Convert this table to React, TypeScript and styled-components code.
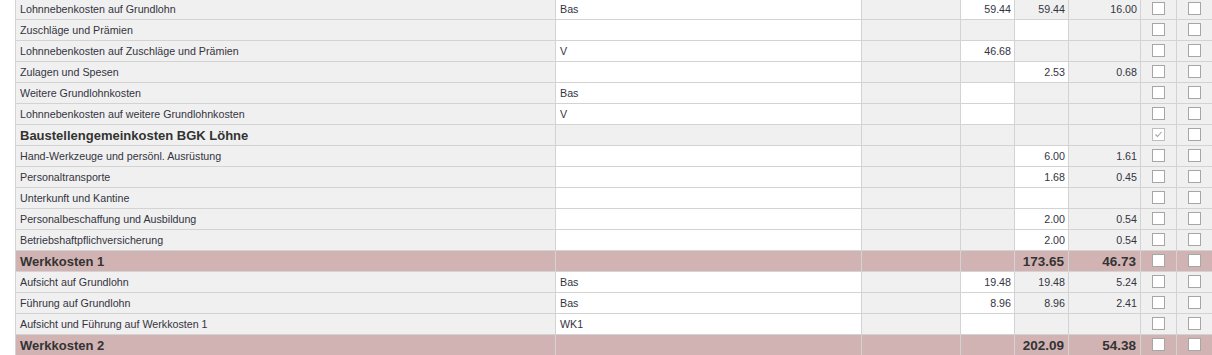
import React from 'react';
import styled, { createGlobalStyle, css } from 'styled-components';

type Kind = 'item' | 'group' | 'sum';

interface CostRow {
  label: string;
  kind?: Kind;
  code?: string;
  a?: string;
  aWhite?: boolean;
  b?: string;
  bWhite?: boolean;
  c?: string;
  checked?: boolean;
}

const rows: CostRow[] = [
  { label: 'Lohnnebenkosten auf Grundlohn', code: 'Bas', a: '59.44', aWhite: true, b: '59.44', c: '16.00' },
  { label: 'Zuschläge und Prämien', bWhite: true },
  { label: 'Lohnnebenkosten auf Zuschläge und Prämien', code: 'V', a: '46.68', aWhite: true },
  { label: 'Zulagen und Spesen', b: '2.53', bWhite: true, c: '0.68' },
  { label: 'Weitere Grundlohnkosten', code: 'Bas', aWhite: true },
  { label: 'Lohnnebenkosten auf weitere Grundlohnkosten', code: 'V', aWhite: true },
  { label: 'Baustellengemeinkosten BGK Löhne', kind: 'group', checked: true },
  { label: 'Hand-Werkzeuge und persönl. Ausrüstung', b: '6.00', bWhite: true, c: '1.61' },
  { label: 'Personaltransporte', b: '1.68', bWhite: true, c: '0.45' },
  { label: 'Unterkunft und Kantine', bWhite: true },
  { label: 'Personalbeschaffung und Ausbildung', b: '2.00', bWhite: true, c: '0.54' },
  { label: 'Betriebshaftpflichversicherung', b: '2.00', bWhite: true, c: '0.54' },
  { label: 'Werkkosten 1', kind: 'sum', b: '173.65', c: '46.73' },
  { label: 'Aufsicht auf Grundlohn', code: 'Bas', a: '19.48', aWhite: true, b: '19.48', c: '5.24' },
  { label: 'Führung auf Grundlohn', code: 'Bas', a: '8.96', aWhite: true, b: '8.96', c: '2.41' },
  { label: 'Aufsicht und Führung auf Werkkosten 1', code: 'WK1', aWhite: true },
  { label: 'Werkkosten 2', kind: 'sum', b: '202.09', c: '54.38' },
];

const GlobalStyle = createGlobalStyle`
  html, body {
    margin: 0;
    padding: 0;
    background: #ffffff;
    overflow: hidden;
  }
  body {
    font-family: "Liberation Sans", Arial, sans-serif;
  }
`;

const Sheet = styled.div`
  display: flex;
  flex-direction: column;
  margin-top: -1px;
  width: 1212px;
  overflow: hidden;
`;

const Row = styled.div<{ $kind: Kind }>`
  display: grid;
  grid-template-columns: 15px 541px 306px 99px 54px 54px 72px 36px 36px;
  height: 21px;
  background: ${(p) => (p.$kind === 'sum' ? '#d2b3b3' : '#f0f0f0')};
`;

const Gutter = styled.div`
  background: #ffffff;
`;

const Cell = styled.div<{ $white?: boolean; $align?: 'left' | 'right'; $bold?: boolean; $big?: boolean; $first?: boolean }>`
  box-sizing: border-box;
  height: 21px;
  border-right: 1px solid #d3d3d3;
  border-bottom: 1px solid #d3d3d3;
  ${(p) => p.$first && css`border-left: 1px solid #d3d3d3;`}
  background: ${(p) => (p.$white ? '#ffffff' : 'transparent')};
  color: #34343f;
  font-size: 10.7px;
  line-height: 20px;
  white-space: nowrap;
  overflow: hidden;
  text-align: ${(p) => p.$align ?? 'left'};
  padding: 0 3px 0 4px;
  ${(p) =>
    p.$bold &&
    css`
      font-size: ${p.$big ? '13.5px' : '13px'};
      font-weight: bold;
      color: #333333;
      padding-right: 4px;
      line-height: 21px;
    `}
`;

const CheckCell = styled(Cell)`
  display: flex;
  align-items: center;
  justify-content: center;
  padding: 0;
`;

const Box = styled.span<{ $checked?: boolean }>`
  box-sizing: border-box;
  width: 13px;
  height: 13px;
  margin-top: -1px;
  background: #ffffff;
  border: 1px solid ${(p) => (p.$checked ? '#bdbdbd' : '#a6a6a6')};
  display: flex;
  align-items: center;
  justify-content: center;
`;

function Check({ checked }: { checked?: boolean }) {
  return (
    <Box $checked={checked}>
      {checked && (
        <svg width="9" height="9" viewBox="0 0 9 9">
          <path d="M1.5 4.5 L3.5 6.5 L7.5 2" fill="none" stroke="#a3a3a3" strokeWidth="1.1" />
        </svg>
      )}
    </Box>
  );
}

export default function App() {
  return (
    <>
      <GlobalStyle />
      <Sheet>
        {rows.map((r) => {
          const kind = r.kind ?? 'item';
          const heading = kind !== 'item';
          const sum = kind === 'sum';
          return (
            <Row key={r.label} $kind={kind}>
              <Gutter />
              <Cell $first $bold={heading}>{r.label}</Cell>
              <Cell $white={kind === 'item'}>{r.code}</Cell>
              <Cell />
              <Cell $white={r.aWhite} $align="right">{r.a}</Cell>
              <Cell $white={r.bWhite} $align="right" $bold={sum} $big>{r.b}</Cell>
              <Cell $align="right" $bold={sum} $big>{r.c}</Cell>
              <CheckCell><Check checked={r.checked} /></CheckCell>
              <CheckCell><Check /></CheckCell>
            </Row>
          );
        })}
      </Sheet>
    </>
  );
}
